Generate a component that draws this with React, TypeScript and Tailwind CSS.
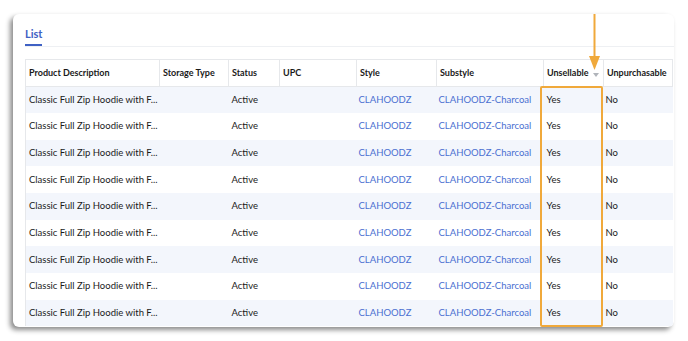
const columns = [
  { label: 'Product Description', w: 134 },
  { label: 'Storage Type', w: 69 },
  { label: 'Status', w: 51 },
  { label: 'UPC', w: 77 },
  { label: 'Style', w: 80 },
  { label: 'Substyle', w: 107 },
  { label: 'Unsellable', w: 60 },
  { label: 'Unpurchasable', w: 69 },
];

const rows = Array.from({ length: 9 }, () => ({
  desc: 'Classic Full Zip Hoodie with F...',
  storage: '',
  status: 'Active',
  upc: '',
  style: 'CLAHOODZ',
  substyle: 'CLAHOODZ-Charcoal',
  unsellable: 'Yes',
  unpurchasable: 'No',
}));

export default function App() {
  return (
    <div className="relative w-[688px] h-[341px] bg-white overflow-hidden font-['Lato',sans-serif] text-[9.5px] text-[#1a1a1a]">
      {/* card */}
      <div className="absolute left-[13px] top-[14px] w-[661px] h-[313px] bg-white rounded-md shadow-[-3px_3px_5px_rgba(0,0,0,0.45)] pl-[12px] pt-[12px] overflow-hidden">
        <div className="flex border-b border-[#eef0f3] mb-[12px]">
          <div className="text-[11px] font-bold text-[#3f61c4] leading-[15px] pb-[3px] border-b-2 border-[#3f61c4]">List</div>
        </div>
        <table className="table-fixed border-collapse w-[647px]">
          <colgroup>
            {columns.map((c) => <col key={c.label} style={{ width: c.w }} />)}
          </colgroup>
          <thead>
            <tr className="h-[27px] bg-white">
              {columns.map((c) => (
                <th key={c.label} className="relative border border-[#e6e8eb] text-left text-[9px] font-bold px-[3px] whitespace-nowrap">
                  {c.label}
                  {c.label === 'Unsellable' && (
                    <span className="absolute right-[4px] top-[13px] w-0 h-0 border-l-[3px] border-r-[3px] border-t-[4px] border-l-transparent border-r-transparent border-t-[#b0b4ba]" />
                  )}
                </th>
              ))}
            </tr>
          </thead>
          <tbody>
            {rows.map((r, i) => (
              <tr key={i} className={`h-[26.67px] ${i % 2 === 0 ? 'bg-[#f3f6fc]' : 'bg-white'}`}>
                <td className="px-[3px] whitespace-nowrap border-l border-[#e6e8eb]">{r.desc}</td>
                <td className="px-[3px]">{r.storage}</td>
                <td className="px-[3px]">{r.status}</td>
                <td className="px-[3px]">{r.upc}</td>
                <td className="px-[2px] text-[#4a6fd1]">{r.style}</td>
                <td className="px-[2px] text-[#4a6fd1] whitespace-nowrap">{r.substyle}</td>
                <td className="px-[3px]">{r.unsellable}</td>
                <td className="px-[2px]">{r.unpurchasable}</td>
              </tr>
            ))}
          </tbody>
        </table>
      </div>

      {/* highlight box over the Unsellable column */}
      <div className="absolute left-[540px] top-[86px] w-[63px] h-[241px] border-2 border-[#f0a93b] rounded-[2px]" />

      {/* arrow */}
      <svg className="absolute left-[588px] top-[14px]" width="13" height="58" viewBox="0 0 13 58">
        <line x1="6.5" y1="0" x2="6.5" y2="46" stroke="#f0a93b" strokeWidth="2" />
        <path d="M1 42 L12 42 L6.5 56 Z" fill="#f0a93b" />
      </svg>
    </div>
  );
}
